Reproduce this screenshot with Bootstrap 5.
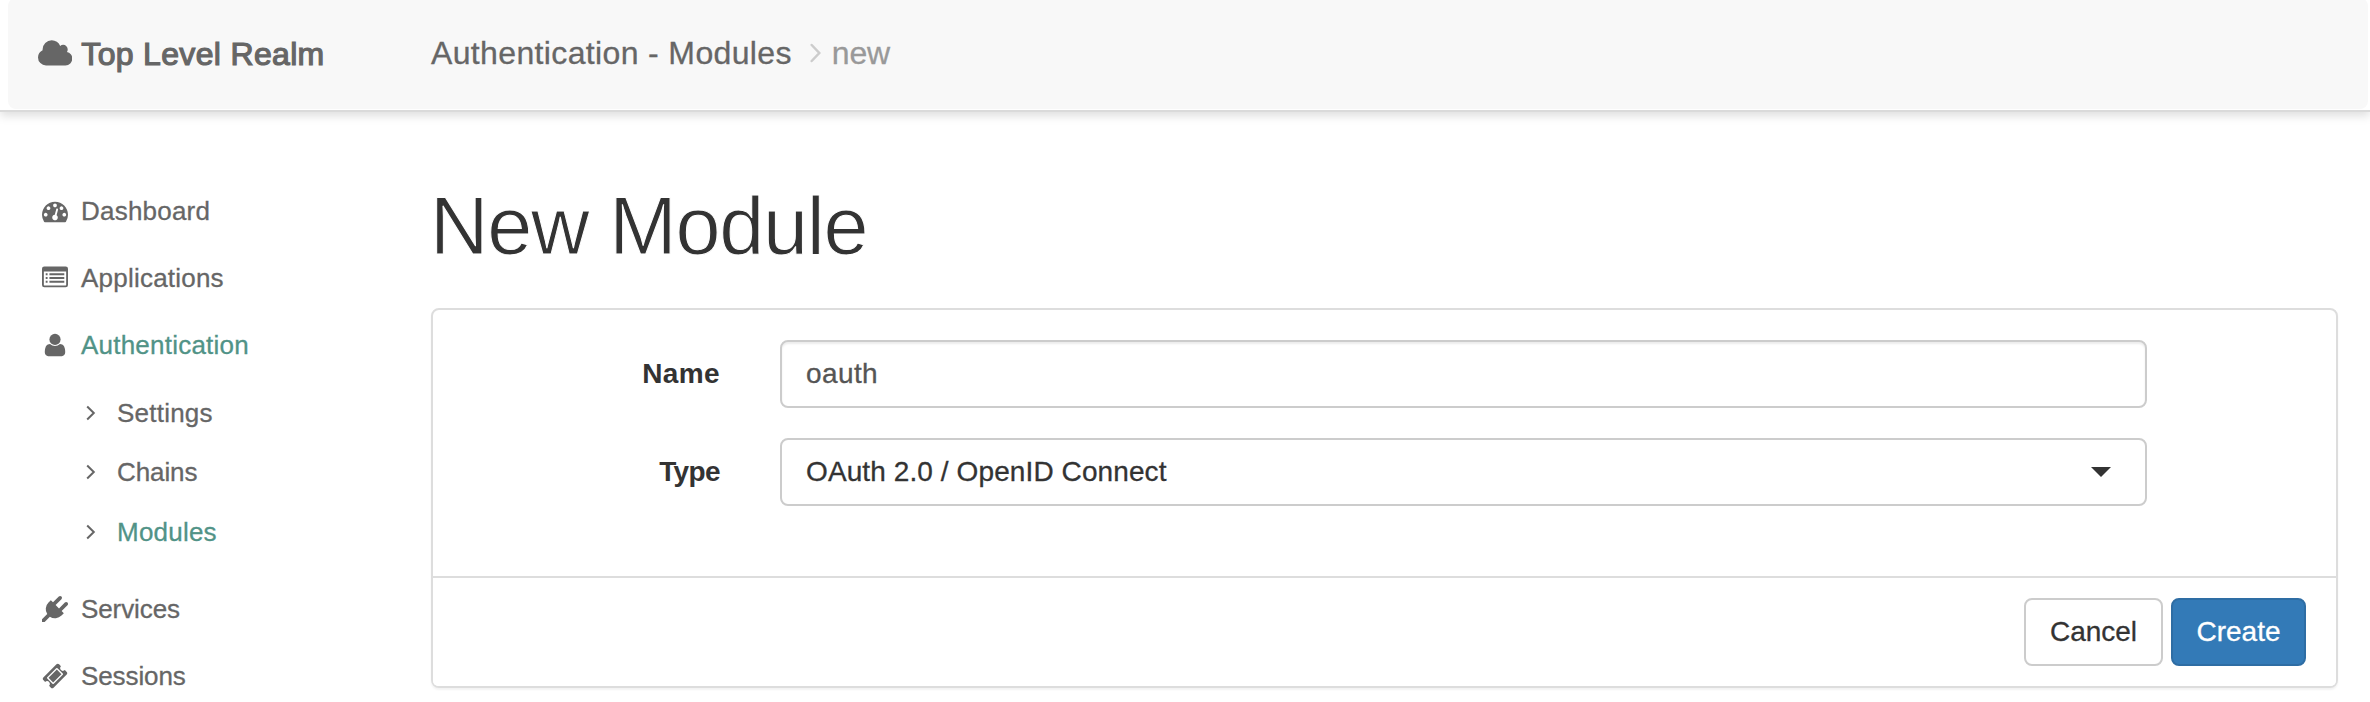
<!DOCTYPE html>
<html lang="en">
<head>
<meta charset="utf-8">
<title>New Module</title>
<link href="https://cdn.jsdelivr.net/npm/bootstrap@5.3.0/dist/css/bootstrap.min.css" rel="stylesheet">
<style>
  body { font-family: "Liberation Sans", Arial, sans-serif; font-size: 28px; line-height: 40px; color: #333; background: #fff; height: 702px; overflow: hidden; }
  svg { fill: currentColor; flex: none; display: block; }
  .topbar { display: flow-root; height: 112px; border-bottom: 2px solid #dadada; box-shadow: 0 4px 9px rgba(0,0,0,.13); background: #fff; }
  .topbar-inner { height: 111px; margin: -2px 2px 0 8px; padding-left: 30px; border-radius: 8px; background: #f8f8f8; color: #666; font-size: 32px; }
  .realm { width: 393px; -webkit-text-stroke: 1.2px #666; letter-spacing: .33px; gap: 9px; }
  .crumbs { letter-spacing: .36px; margin-bottom: 1px; -webkit-text-stroke: .3px; }
  .crumbs .current { color: #999; letter-spacing: -.2px; }
  .crumbs svg { margin: 0 11px 0 18px; }
  .sidebar { width: 389px; margin-top: 65px; color: #666; font-size: 26px; letter-spacing: .22px; -webkit-text-stroke: .3px; }
  .sidebar .nav-link { height: 67px; padding: 0; color: #666; gap: 13px; }
  .sidebar .nav-link.active { color: #519387; }
  .sidebar .nav-link svg { color: #666; }
  .sidebar .tight { letter-spacing: -.1px; }
  .subnav { padding: 5px 0 14px 44px; }
  .subnav .nav-link { height: 59.5px; gap: 21px; }
  .page { width: 1907px; margin-top: 69px; }
  h1 { font-size: 81px; line-height: 90px; letter-spacing: -1.3px; font-weight: 400; margin: 0 0 37px -1px; color: #333; -webkit-text-stroke: 1px #fff; }
  .panel { border: 2px solid #ddd; border-radius: 8px; box-shadow: 0 2px 2px rgba(0,0,0,.05); }
  .panel .card-body { padding: 30px 0 70px; gap: 30px; }
  .panel .card-footer { background: #fff; border-top: 2px solid #ddd; padding: 20px 30px; gap: 8px; }
  .field-label { width: 287px; margin-right: 60px; font-weight: 700; text-align: right; letter-spacing: .4px; }
  .field-label.tight { letter-spacing: -.6px; }
  .panel .form-control { width: 1367px; height: 68px; padding: 0 24px; border: 2px solid #ccc; border-radius: 8px; font-size: 28px; line-height: 40px; color: #555; letter-spacing: .4px; -webkit-text-stroke: .3px; box-shadow: inset 0 2px 2px rgba(0,0,0,.075); }
  .panel button.form-control { color: #333; box-shadow: none; padding-right: 34px; letter-spacing: .1px; }
  .panel .btn { height: 68px; padding: 0; border: 2px solid #ccc; border-radius: 8px; font-size: 28px; color: #333; width: 139px; background: #fff; -webkit-text-stroke: .3px; }
  .panel .btn-primary { width: 135px; color: #fff; background: #337ab7; border-color: #2e6da4; }
</style>
</head>
<body>
<header class="topbar">
  <div class="topbar-inner d-flex align-items-center">
    <div class="realm d-flex align-items-center">
      <svg width="34.3" height="32" viewBox="0 0 1920 1792"><path d="M1920 1152q0 159-112.500 271.500t-271.500 112.500h-1088q-185 0-316.500-131.500t-131.500-316.500q0-132 71-241.500t187-163.500q-2-28-2-43 0-212 150-362t362-150q158 0 286.500 88t187.500 230q70-62 166-62 106 0 181 75t75 181q0 75-41 138 129 30 213 134.500t84 239.500z"/></svg>
      <span>Top Level Realm</span>
    </div>
    <div class="crumbs d-flex align-items-center">
      <span>Authentication - Modules</span>
      <svg width="11" height="20" viewBox="0 0 11 20"><path d="M1.700 2L9.300 10L1.700 18" fill="none" stroke="#ccc" stroke-width="2.500" stroke-linecap="round"/></svg>
      <span class="current">new</span>
    </div>
  </div>
</header>
<div class="d-flex" style="padding-left:42px">
  <nav class="sidebar nav flex-column flex-nowrap">
    <a class="nav-link d-flex align-items-center"><svg width="26" height="26" viewBox="0 0 1792 1792"><path d="M384 1152q0-53-37.500-90.500t-90.500-37.500-90.500 37.500-37.500 90.500 37.500 90.500 90.500 37.500 90.500-37.500 37.500-90.500zm192-448q0-53-37.500-90.500t-90.500-37.500-90.500 37.500-37.500 90.500 37.500 90.500 90.500 37.500 90.500-37.500 37.500-90.500zm428 481l101-382q6-26-7.500-48.500t-38.500-29.500-48 6.500-30 39.500l-101 382q-60 5-107 43.500t-63 98.500q-20 77 20 146t117 89 146-20 89-117q16-60-6-117t-72-91zm660-33q0-53-37.500-90.500t-90.500-37.500-90.500 37.500-37.500 90.500 37.500 90.500 90.500 37.500 90.500-37.500 37.500-90.500zm-640-640q0-53-37.500-90.500t-90.500-37.500-90.500 37.500-37.500 90.500 37.500 90.500 90.500 37.500 90.500-37.500 37.500-90.500zm448 192q0-53-37.500-90.500t-90.500-37.500-90.500 37.500-37.500 90.500 37.500 90.500 90.500 37.500 90.500-37.500 37.500-90.500zm320 448q0 261-141 483-19 29-54 29h-1402q-35 0-54-29-141-221-141-483 0-182 71-348t191-286 286-191 348-71 348 71 286 191 191 286 71 348z"/></svg>Dashboard</a>
    <a class="nav-link d-flex align-items-center"><svg width="26" height="26" viewBox="0 0 28 28"><path fill-rule="evenodd" d="M2.500 1.500h23A2.500 2.500 0 0 1 28 4v17.500a2.500 2.500 0 0 1-2.500 2.500h-23A2.500 2.500 0 0 1 0 21.500V4a2.500 2.500 0 0 1 2.500-2.500zM2 7v14.500c0 .3.200.5.500.5h23c.3 0 .5-.2.500-.5V7z"/><path d="M4 9h2v2H4zM4 13h2v2H4zM4 17h2v2H4zM8 9h16v2H8zM8 13h16v2H8zM8 17h16v2H8z"/></svg>Applications</a>
    <a class="nav-link active d-flex align-items-center"><svg width="26" height="26" viewBox="0 0 1792 1792"><path transform="translate(-89.600 0) scale(1.100 1)" d="M1536 1399q0 109-62.500 187t-150.500 78h-854q-88 0-150.500-78t-62.500-187q0-85 8.500-160.500t31.500-152 58.500-131 94-89 134.500-34.500q131 128 313 128t313-128q76 0 134.500 34.500t94 89 58.500 131 31.500 152 8.500 160.500z"/><circle cx="896" cy="512" r="384"/></svg>Authentication</a>
    <div class="subnav nav flex-column">
      <a class="nav-link d-flex align-items-center"><svg width="10" height="16" viewBox="0 0 10 16"><path d="M1.200 1.500L7.800 8L1.200 14.500" fill="none" stroke="#666" stroke-width="2"/></svg>Settings</a>
      <a class="nav-link d-flex align-items-center"><svg width="10" height="16" viewBox="0 0 10 16"><path d="M1.200 1.500L7.800 8L1.200 14.500" fill="none" stroke="#666" stroke-width="2"/></svg><span class="tight">Chains</span></a>
      <a class="nav-link active d-flex align-items-center"><svg width="10" height="16" viewBox="0 0 10 16"><path d="M1.200 1.500L7.800 8L1.200 14.500" fill="none" stroke="#666" stroke-width="2"/></svg>Modules</a>
    </div>
    <a class="nav-link d-flex align-items-center"><svg width="26" height="26" viewBox="0 0 1792 1792"><path d="M1755 453q37 38 37 90.500t-37 90.500l-401 400 150 150-160 160q-163 163-389.500 186.500t-411.500-100.500l-362 362h-181v-181l362-362q-124-185-100.500-411.500t186.500-389.500l160-160 150 150 400-401q38-37 91-37t90 37 37 90.500-37 90.500l-400 401 234 234 401-400q38-37 91-37t90 37z"/></svg><span class="tight">Services</span></a>
    <a class="nav-link d-flex align-items-center"><svg width="26" height="26" viewBox="0 0 1792 1792"><path d="M1024 452l316 316-572 572-316-316zm-211 979l618-618q19-19 19-45t-19-45l-362-362q-18-18-45-18t-45 18l-618 618q-19 19-19 45t19 45l362 362q18 18 45 18t45-18zm889-637l-907 908q-37 37-90.500 37t-90.500-37l-126-126q56-56 56-136t-56-136-136-56-136 56l-125-126q-37-37-37-90.500t37-90.500l907-906q37-37 90.500-37t90.500 37l125 125q-56 56-56 136t56 136 136 56 136-56l126 125q37 37 37 90.500t-37 90.500z"/></svg><span class="tight">Sessions</span></a>
  </nav>
  <main class="page">
    <h1>New Module</h1>
    <div class="card panel">
      <div class="card-body d-flex flex-column">
        <div class="d-flex align-items-center">
          <label class="field-label" for="name">Name</label>
          <input class="form-control" id="name" value="oauth">
        </div>
        <div class="d-flex align-items-center">
          <label class="field-label tight">Type</label>
          <button type="button" class="form-control d-flex align-items-center justify-content-between">OAuth 2.0 / OpenID Connect
            <svg width="20" height="10" viewBox="0 0 20 10"><path d="M0 0h20L10 10z"/></svg></button>
        </div>
      </div>
      <div class="card-footer d-flex justify-content-end">
        <button type="button" class="btn">Cancel</button>
        <button type="button" class="btn btn-primary">Create</button>
      </div>
    </div>
  </main>
</div>
<script src="https://cdn.jsdelivr.net/npm/bootstrap@5.3.0/dist/js/bootstrap.bundle.min.js"></script>
</body>
</html>
